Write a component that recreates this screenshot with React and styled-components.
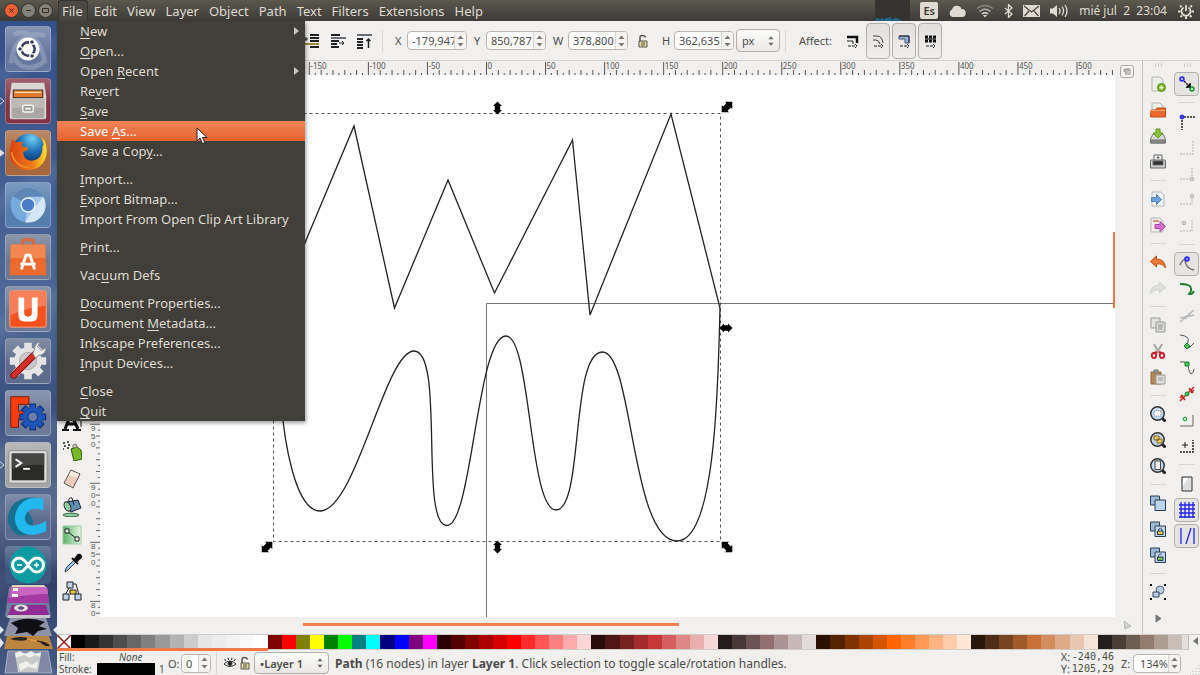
import React from "react";
import styled, { createGlobalStyle, css } from "styled-components";
import {
  FlipHorizontal,
  FlipVertical,
  RotateCcw,
  RotateCw,
  Layers,
  SquareDashed,
  SquareStack,
  ArrowDownToLine,
  ArrowUpToLine,
  MousePointer2,
  Spline,
  Waves,
  Search,
  Square,
  Box,
  Circle,
  Star,
  Tornado,
  Pencil,
  PenTool,
  Brush,
} from "lucide-react";

const GlobalStyle = createGlobalStyle`
  * {
    box-sizing: border-box;
  }
  body {
    margin: 0;
    font-family: "Noto Sans", "Open Sans", sans-serif;
    font-size: 12px;
    color: #4c4c4c;
    background: #f1f0ee;
  }
  button, input, select {
    font: inherit;
    color: inherit;
    margin: 0;
    padding: 0;
  }
  svg {
    display: block;
  }
`;

/* ---------- data ---------- */

const topMenus = ["Edit", "View", "Layer", "Object", "Path", "Text", "Filters", "Extensions", "Help"];

// the underscore marks the mnemonic letter
const fileMenu = [
  [{ label: "_New", sub: true }, { label: "_Open..." }, { label: "Open _Recent", sub: true }, { label: "Re_vert" }, { label: "_Save" }, { label: "Save _As...", active: true }, { label: "Save a Cop_y..." }],
  [{ label: "_Import..." }, { label: "_Export Bitmap..." }, { label: "Import From Open Clip Art Library" }],
  [{ label: "_Print..." }],
  [{ label: "Vac_uum Defs" }],
  [{ label: "_Document Properties..." }, { label: "Document _Metadata..." }, { label: "In_kscape Preferences..." }, { label: "_Input Devices..." }],
  [{ label: "_Close" }, { label: "_Quit" }],
];

const palette = [
  "#000000", "#1a1a1a", "#333333", "#4d4d4d", "#666666", "#808080", "#999999", "#b3b3b3", "#cccccc", "#e6e6e6", "#ececec", "#f2f2f2", "#f9f9f9", "#ffffff",
  "#800000", "#ff0000", "#808000", "#ffff00", "#008000", "#00ff00", "#008080", "#00ffff", "#000080", "#0000ff", "#800080", "#ff00ff",
  "#2b0000", "#550000", "#800000", "#aa0000", "#d40000", "#ff0000", "#ff2a2a", "#ff5555", "#ff8080", "#ffaaaa", "#ffd5d5",
  "#280b0b", "#501616", "#782121", "#a02c2c", "#c83737", "#d35f5f", "#de8787", "#e9afaf", "#f4d7d7",
  "#241c1c", "#483737", "#6c5353", "#916f6f", "#ac9393", "#c8b7b7", "#e3dbdb",
  "#2b1100", "#552200", "#803300", "#aa4400", "#d45500", "#ff6600", "#ff7f2a", "#ff9955", "#ffb380", "#ffccaa", "#ffe6d5",
  "#28170b", "#502d16", "#784421", "#a05a2c", "#c87137", "#d38d5f", "#deaa87", "#e9c6af", "#f4e3d7",
  "#241f1c", "#483e37", "#6c5d53", "#917c6f", "#ac9d93", "#c8beb7", "#e3dedb",
];

/* ---------- launcher icons ---------- */

const DashIcon = () => (
  <svg viewBox="0 0 46 46">
    <path d="M5 38C8 12 22 5 41 9M41 38C36 10 22 2 8 8M8 30c4 14 20 16 32 6" stroke="#b9c4da" strokeWidth="5" fill="none" opacity=".35" />
    <circle cx="23" cy="23" r="12" fill="#fff" />
    <circle cx="23" cy="23" r="7" fill="none" stroke="#343c5c" strokeWidth="2.6" />
    <g fill="#343c5c" stroke="#fff" strokeWidth="1.2">
      <circle cx="14.600" cy="23" r="2.500" />
      <circle cx="27.200" cy="15.700" r="2.500" />
      <circle cx="27.200" cy="30.300" r="2.500" />
    </g>
  </svg>
);

const FilesIcon = () => (
  <svg viewBox="0 0 46 46">
    <path d="M6 4h34l2 14v22q0 2-2 2H6q-2 0-2-2V18z" fill="#d9d7d4" />
    <path d="M7 11h32v9H7z" fill="#3a3029" />
    <path d="M8 12h30v7H8z" fill="#e2762c" />
    <path d="M9 14h28" stroke="#ffd9a0" strokeWidth="1.500" />
    <path d="M6 20h34v21H6z" fill="#a9a8a5" />
    <path d="M6 20h34v10H6z" fill="#bcbab7" />
    <rect x="17.500" y="27.500" width="11" height="7" rx="1.500" fill="#9b9a97" stroke="#f4f4f4" strokeWidth="1.500" />
    <path d="M20 31h6" stroke="#f4f4f4" strokeWidth="2" />
  </svg>
);

const FirefoxIcon = () => (
  <svg viewBox="0 0 46 46">
    <defs>
      <radialGradient id="ffGlobe" cx=".6" cy=".15" r=".8">
        <stop offset="0" stopColor="#6fd0ee" />
        <stop offset=".5" stopColor="#1c6fb5" />
        <stop offset="1" stopColor="#10275c" />
      </radialGradient>
      <linearGradient id="ffFox" x1="0" y1="0" x2="1" y2="0">
        <stop offset="0" stopColor="#d9400f" />
        <stop offset=".6" stopColor="#ee7a17" />
        <stop offset="1" stopColor="#fbe02c" />
      </linearGradient>
    </defs>
    <circle cx="24" cy="20" r="17" fill="url(#ffGlobe)" />
    <path d="M6 9c2 0 3 1 4 3 3-1 5-1 8 0l-2 3c1 2 4 2 7 2 1 3-3 4-5 5 0 5 3 9 9 9 7 0 12-6 11-15 3-1-1-8 0-9 5 5 5 13 4 19-2 9-9 15-18 15C12 41 4 33 4 24c0-5 1-8 2-15z" fill="url(#ffFox)" />
    <path d="M6 22c1 9 8 16 18 16" stroke="#f48a25" strokeWidth="2" fill="none" />
  </svg>
);

const ChromiumIcon = () => (
  <svg viewBox="0 0 46 46">
    <circle cx="23" cy="23" r="18" fill="#a4c7ea" />
    <path d="M23 23L7.500 14A18 18 0 0 1 39 14.500H23z" fill="#5c87b5" />
    <path d="M23 23L7.500 14A18 18 0 0 0 20 41z" fill="#76a9dd" />
    <path d="M39 14.500A18 18 0 0 1 20 41l9-14z" fill="#d5e6f6" />
    <circle cx="23" cy="23" r="8" fill="#e8f1fa" />
    <circle cx="23" cy="23" r="6.500" fill="#4a7fc8" />
  </svg>
);

const SoftwareIcon = () => (
  <svg viewBox="0 0 46 46">
    <path d="M17 13V8q0-3 3-3h6q3 0 3 3v5" stroke="#d8683e" strokeWidth="3" fill="none" />
    <path d="M5 10h36l1 31q0 1-1 1H5q-1 0-1-1z" fill="#ec6a2b" />
    <path d="M5 10h36l.4 14H4.600z" fill="#f1874e" />
    <path d="M16 36l5-15h4l5 15M15 30.500h16" stroke="#fff" strokeWidth="3" fill="none" />
  </svg>
);

const UbuntuOneIcon = () => (
  <svg viewBox="0 0 46 46">
    <rect x="4" y="4" width="38" height="38" rx="2" fill="#f5511d" stroke="#f7a88a" />
    <path d="M4.500 4.500h37v15q-20 2-37 10z" fill="#f98058" />
    <path d="M13 11h6v16q0 4 4 4t4-4V11h6v18q0 7-6 7h-8q-6 0-6-7z" fill="#fff" />
  </svg>
);

const SettingsIcon = () => (
  <svg viewBox="0 0 46 46">
    <g stroke="#e4e4e4" strokeWidth="8">
      <path d="M23 4v38M4 23h38M9.500 9.500l27 27M36.500 9.500l-27 27" />
    </g>
    <circle cx="23" cy="23" r="14.500" fill="#e4e4e4" />
    <circle cx="23" cy="23" r="9" fill="#c6c8cb" stroke="#aaa" />
    <path d="M8 38L30 16" stroke="#8d1210" strokeWidth="7" strokeLinecap="round" />
    <path d="M8 38L30 16" stroke="#d32f2a" strokeWidth="5" strokeLinecap="round" />
    <path d="M28 15l2-4q-1-6 6-8l-3 5 4 4 5-3q-1 8-8 8l-3 3z" fill="#eee" stroke="#888" />
  </svg>
);

const FreecadIcon = () => (
  <svg viewBox="0 0 46 46">
    <path d="M5 6h19v8H13v7h8v8h-8v9H5z" fill="#fc3d0b" stroke="#7a1a05" />
    <g stroke="#0b2c72" strokeWidth="7">
      <path d="M28 13v28M14 27h28M18 17l20 20M38 17L18 37" />
    </g>
    <g stroke="#1f55b8" strokeWidth="5">
      <path d="M28 14v26M15 27h26M19 18l18 18M37 18L19 36" />
    </g>
    <circle cx="28" cy="27" r="10" fill="#1f55b8" />
    <circle cx="28" cy="27" r="5" fill="#6d7fa8" stroke="#0b2c72" />
  </svg>
);

const TerminalIcon = () => (
  <svg viewBox="0 0 46 46">
    <rect x="3" y="8" width="40" height="34" rx="2" fill="#dcdcda" stroke="#8c8c8a" />
    <rect x="6" y="11" width="34" height="28" fill="#2a2a28" />
    <path d="M6 11h34v12Q20 22 6 28z" fill="#454543" />
    <path d="M10 17l6 4-6 4" stroke="#fff" strokeWidth="2" fill="none" />
    <path d="M18 27h7" stroke="#fff" strokeWidth="2" />
  </svg>
);

const CadIcon = () => (
  <svg viewBox="0 0 46 46">
    <path d="M37 4Q16-1 6 12-2 26 6 36q6 8 14 6l8-4V26L20 12z" fill="#17708f" />
    <path d="M39 4v12q-11-4-17 2-5 7 0 12 7 5 20-3v11q-18 8-29-2Q5 24 14 11 23 0 39 4z" fill="#22b8ee" />
  </svg>
);

const ArduinoIcon = () => (
  <svg viewBox="0 0 46 38">
    <circle cx="23" cy="19" r="18.500" fill="#0d9aa0" />
    <path d="M23 19c-4-6-6-7-8.500-7a7 7 0 0 0 0 14c2.500 0 4.500-1 8.500-7s6-7 8.500-7a7 7 0 0 1 0 14c-2.500 0-4.500-1-8.500-7z" fill="none" stroke="#fff" strokeWidth="3" />
    <path d="M12 19h5M29 19h5M31.500 16.500v5" stroke="#fff" strokeWidth="1.600" />
  </svg>
);

const FoldedStack = () => (
  <svg viewBox="0 0 57 91" width="57" height="91">
    <path d="M9 3h38l4 30H5z" fill="#8d95b0" opacity=".7" />
    <path d="M12 1h32l3 3H11z" fill="#d9d3c4" />
    <path d="M11 3h36l2 16H7z" fill="#a53ba2" />
    <path d="M11 3h36l1 7q-20 0-39 4z" fill="#c765c0" />
    <path d="M13 4h5v3h-5zM12 10h6v3h-6z" fill="#fff" />
    <path d="M12 21h34l3 10H8z" fill="#8f2b92" />
    <ellipse cx="21" cy="24" rx="7" ry="3.500" fill="#ddd" />
    <ellipse cx="21" cy="24" rx="3" ry="1.800" fill="#6a4a80" />
    <path d="M8 31h42v3H7z" fill="#c5c6c8" />
    <path d="M10 34h36l6 18H4z" fill="#8e93a6" />
    <path d="M11 39q16-8 34-1l-6 4 8 3-9 2-5 5-6-4-12 2 3-6z" fill="#101014" />
    <path d="M0 42l4 4-4 4zM57 42l-4 4 4 4z" fill="#e3e6ee" />
    <path d="M0 54l4 5-4 5z" fill="#e3e6ee" />
    <path d="M7 52h42l4 13H4z" fill="#bb8640" />
    <path d="M10 55q10-4 22 0l8 2q8 1 10 5-6 1-10-4l-13-2q-8 2-17-1z" fill="#2b2320" />
    <path d="M27 55l10 2" stroke="#e79a3f" strokeWidth="2" />
    <path d="M8 67h40l4 22H5z" fill="#8089a3" stroke="#a7aec2" />
    <path d="M15 69h26l-3 19H18z" fill="#c9cbc9" />
    <path d="M15 69l5-2 5 3 6-3 5 3 5-2-1 5-5-2-5 3-6-3-8 3zM19 80l7-3 6 4 6-4-1 8-9-2-8 4z" fill="#eff0ec" />
  </svg>
);

const launcherItems = [
  { name: "Dash", icon: <DashIcon />, tint: "#64789f" },
  { name: "Files", icon: <FilesIcon />, tint: "#833343", mark: "hollow" },
  { name: "Firefox", icon: <FirefoxIcon />, tint: "#a8683f", mark: "solid" },
  { name: "Chromium", icon: <ChromiumIcon />, tint: "#577fae" },
  { name: "Software", icon: <SoftwareIcon />, tint: "#6d7893" },
  { name: "Ubuntu One", icon: <UbuntuOneIcon />, tint: "#6d7893" },
  { name: "Settings", icon: <SettingsIcon />, tint: "#5d6c8c" },
  { name: "FreeCAD", icon: <FreecadIcon />, tint: "#6b7a98" },
  { name: "Terminal", icon: <TerminalIcon />, tint: "#a5a5a5", mark: "hollow" },
  { name: "CAD", icon: <CadIcon />, tint: "#5a6c90" },
];

/* ---------- small icons ---------- */

const Icon = styled.svg.attrs((p) => ({
  viewBox: "0 0 16 16",
  fill: "none",
  stroke: p.stroke || "#222",
}))`
  width: 16px;
  height: 16px;
  flex: none;
`;

const LowerBottomIcon = () => (
  <Icon strokeWidth="2">
    <path d="M6 2h9M6 5h9M6 8h9M6 14h9" />
    <path d="M0 11h15" stroke="#a08a3a" />
    <path d="M0 6h4M2 4v4" strokeWidth="1" />
  </Icon>
);
const LowerIcon = () => (
  <Icon strokeWidth="2">
    <path d="M1 2h9M1 8h8M1 11h6M1 14h8" />
    <path d="M1 5h15" stroke="#666e78" />
    <path d="M9 10h5m-2-2l2 2-2 2" strokeWidth="1" />
  </Icon>
);
const RaiseTopIcon = () => (
  <Icon strokeWidth="2">
    <path d="M1 6h6M1 9h6M1 12h6M1 15h6" />
    <path d="M1 2h15" stroke="#666e78" />
    <path d="M12.500 15V6m-2 2l2-2 2 2" strokeWidth="1.500" />
  </Icon>
);
const LockIcon = () => (
  <Icon stroke="#555">
    <path d="M5 8V4.500q0-2 2.500-2t3 2" strokeWidth="1.500" />
    <path d="M4 8h8v6H4z" fill="#e9dc9a" />
    <path d="M6 10h4M6 12h4" />
  </Icon>
);
const ScaleStrokeIcon = () => (
  <Icon>
    <path d="M3 4h10v6" strokeWidth="2.500" stroke="#111" />
    <path d="M3 8h6v3" />
    <path d="M4 13h9m-2-2l2 2-2 2" strokeDasharray="3 1" />
  </Icon>
);
const ScaleRadiusIcon = () => (
  <Icon>
    <path d="M3 3h4q5 0 6 7M3 7h3q3 0 4 4" stroke="#444" />
    <path d="M4 13h9m-2-2l2 2-2 2" strokeDasharray="3 1" />
  </Icon>
);
const GradientMoveIcon = () => (
  <Icon>
    <path d="M3 3h10v7H9V6H3z" fill="#8fb3da" stroke="#557" />
    <path d="M3 3h10v7" />
    <path d="M4 13h9m-2-2l2 2-2 2" strokeDasharray="3 1" />
  </Icon>
);
const PatternMoveIcon = () => (
  <Icon>
    <path d="M3 4h11M3 8h11" strokeWidth="3" stroke="#111" strokeDasharray="3 1" />
    <path d="M3 6h11" stroke="#111" />
    <path d="M4 13h9m-2-2l2 2-2 2" strokeDasharray="3 1" />
  </Icon>
);
const EyeIcon = () => (
  <Icon stroke="#333">
    <path d="M2 9q6-6 12 0-6 5-12 0zM4 6L2.500 4M6.500 5L6 2.500M9.500 5l.5-2.500M12 6l1.500-2" />
    <circle cx="8" cy="8.500" r="2" fill="#222" />
  </Icon>
);

const NewDoc = () => (
  <Icon stroke="#b5b5b2">
    <path d="M2 1h8l3 3v11H2z" fill="#eceeea" />
    <circle cx="11.500" cy="11.500" r="4" fill="#80b629" stroke="#5d8a1a" />
    <path d="M11.500 9.500v4M9.500 11.500h4" stroke="#e6f5c8" strokeWidth="1.500" />
  </Icon>
);
const OpenDoc = () => (
  <Icon stroke="#b5b5b2">
    <path d="M2 9V1h8l3 3v5" fill="#eceeea" />
    <path d="M.5 15L1 8h4l2-2h8.500v9z" fill="#ee682b" stroke="#c44d18" />
    <path d="M1 8.500h14" stroke="#f9ab7e" />
  </Icon>
);
const SaveDoc = () => (
  <Icon stroke="#777">
    <path d="M3 6h10l2.500 5v4H.5v-4z" fill="#d6d7d5" />
    <path d="M1 12h14v3H1z" fill="#888a86" />
    <path d="M6 1h4v4h3l-5 5-5-5h3z" fill="#8bc53c" stroke="#63951e" />
  </Icon>
);
const PrintDoc = () => (
  <Icon stroke="#666">
    <path d="M4 6V1h8v5" fill="#f4f4f4" />
    <path d="M.5 7q0-1 1-1h13q1 0 1 1v7H.5z" fill="#cfd0ce" />
    <path d="M3 7h10v4H3z" fill="#333" />
    <path d="M8 2v3M6.500 3.500h3" />
  </Icon>
);
const ImportDoc = () => (
  <Icon stroke="#b5b5b2">
    <path d="M2 1h9l3 3v11H2z" fill="#f5f6f8" />
    <path d="M1.500 6.500h5v-3l5 5-5 5v-3h-5z" fill="#6fa4d8" stroke="#4a83bd" />
  </Icon>
);
const ExportDoc = () => (
  <Icon stroke="#b5b5b2">
    <path d="M1 1h9l3 3v11H1z" fill="#f6ecec" />
    <path d="M3 4h6" stroke="#c98" strokeWidth="2" />
    <path d="M5 7.500h5v-3l5.500 5-5.500 5v-3H5z" fill="#d56fd0" stroke="#a94aa5" />
  </Icon>
);
const UndoIcon = () => (
  <Icon stroke="#bd5218">
    <path d="M6.500 2v3Q15 5 15.500 14q-3-5-9-4v3l-6-5.500z" fill="#ec7a35" />
  </Icon>
);
const RedoIcon = () => (
  <Icon stroke="#cfd2cc">
    <path d="M9.500 2v3Q1 5 .5 14q3-5 9-4v3l6-5.500z" fill="#dde0da" />
  </Icon>
);
const CopyDoc = () => (
  <Icon stroke="#9a9a97">
    <path d="M1 1h9v10H1z" fill="#e2e3e0" />
    <path d="M6 5h9v10H6z" fill="#d9dad7" />
    <path d="M8 8h5M8 10h5M8 12h4" />
  </Icon>
);
const CutIcon = () => (
  <Icon>
    <path d="M4 1l5 9M12 1l-5 9" stroke="#a5a5a5" strokeWidth="2" />
    <path d="M7 9l-3 1M9 9l3 1" stroke="#c8202a" strokeWidth="2" />
    <ellipse cx="4" cy="12.500" rx="2.200" ry="2.500" stroke="#c8202a" strokeWidth="1.800" />
    <ellipse cx="12" cy="12.500" rx="2.200" ry="2.500" stroke="#c8202a" strokeWidth="1.800" />
  </Icon>
);
const PasteIcon = () => (
  <Icon stroke="#8a6a40">
    <path d="M1 3h10v12H1z" fill="#b38a55" />
    <path d="M4 1h4v3H4z" fill="#999" stroke="#777" />
    <path d="M6 6h9v9H6z" fill="#dfe0dd" stroke="#9a9a97" />
    <path d="M8 9h5M8 11h5" stroke="#9a9a97" />
  </Icon>
);
const Zoom = ({ children }) => (
  <Icon>
    <path d="M12 12l3.500 3.500" stroke="#222" strokeWidth="3" />
    <circle cx="7.500" cy="7.500" r="6.700" fill="#c4d9ee" stroke="#333" strokeWidth="1.500" />
    {children}
  </Icon>
);
const Windows = ({ children }) => (
  <Icon stroke="#2c3e52">
    <path d="M.5 1h9v9h-9z" fill="#9dbad6" />
    <path d="M5 5h10.500v10.500H5z" fill="#bcd5ec" />
    {children}
  </Icon>
);
const CloneIcon = () => (
  <Icon>
    <circle cx="10" cy="6" r="4" fill="#b8cde2" stroke="#567" />
    <path d="M3 8h6v5H3z" fill="#b8cde2" stroke="#345" />
    <path d="M0 1h2M14 1h2M0 15h2M14 15h2" strokeWidth="2" stroke="#111" />
  </Icon>
);
const ExpandIcon = () => (
  <Icon>
    <path d="M6 5l5 3.500L6 12z" fill="#777" stroke="#777" />
  </Icon>
);

const commands = [
  [["New document", <NewDoc />], ["Open document", <OpenDoc />], ["Save document", <SaveDoc />], ["Print", <PrintDoc />]],
  [["Import", <ImportDoc />], ["Export", <ExportDoc />]],
  [["Undo", <UndoIcon />], ["Redo", <RedoIcon />]],
  [["Copy", <CopyDoc />], ["Cut", <CutIcon />], ["Paste", <PasteIcon />]],
  [
    ["Zoom selection", <Zoom><path d="M4 5h7v5H4z" fill="#fff" strokeDasharray="1 1" stroke="#888" /></Zoom>],
    ["Zoom drawing", <Zoom><path d="M4 4h5v4H4zM7 7h5v4H7z" fill="#f4cf62" stroke="#7a6220" /></Zoom>],
    ["Zoom page", <Zoom><path d="M5 3h5.500v8.500H5z" fill="#eee" stroke="#444" /></Zoom>],
  ],
  [
    ["Duplicate", <Windows />],
    ["Clone", <Windows><path d="M8.500 10V8.500q2-2.500 3.500 0V10" /><path d="M7.500 10h5.500v3.500H7.500z" fill="#f2c63c" /></Windows>],
    ["Unlink clone", <Windows><path d="M8.500 10V8.500q1-2 3-1.500" /><path d="M7.500 10h5.500v3.500H7.500z" fill="#7fc04a" /></Windows>],
  ],
  [["Group", <CloneIcon />], ["More commands", <ExpandIcon />]],
];

const Faint = ({ d, dot }) => (
  <Icon stroke="#b3b3b3">
    <path d={d} strokeDasharray="2 1" />
    {dot && <circle cx={dot[0]} cy={dot[1]} r="1.800" fill="#d5d5d5" />}
  </Icon>
);

const snaps = [
  [
    ["Enable snapping", <Icon><path d="M3 3l9 9" stroke="#111" strokeWidth="1.500" strokeDasharray="2 1" /><path d="M11.500 7v4.500H7z" fill="#111" /><circle cx="3" cy="3" r="2" stroke="#2020ee" strokeWidth="1.500" fill="#bbf" /><circle cx="13" cy="13" r="2" stroke="#1c8a3a" strokeWidth="1.500" fill="#bfb" /></Icon>, true],
  ],
  [
    ["Snap bounding box", <Icon><path d="M2 3h14M3 3v13" strokeDasharray="2 1" strokeWidth="1.500" /><circle cx="3" cy="3" r="2" fill="#44f" stroke="#22e" /></Icon>],
    ["Snap edges", <Faint d="M1 14h13V0" />],
    ["Snap corners", <Faint d="M1 13h12V1" dot={[13, 13]} />],
    ["Snap edge midpoints", <Faint d="M1 12h12V2" dot={[13, 4]} />],
    ["Snap centers", <Faint d="M1 13h12V1" dot={[5, 5]} />],
  ],
  [
    ["Snap nodes", <Icon stroke="#666"><path d="M1 9q3-7 7-6-3 1-1 5 2 5 8 6" strokeWidth="1.300" /><circle cx="8" cy="3" r="2" stroke="#2020ee" strokeWidth="1.500" fill="#88f" /></Icon>, true],
    ["Snap paths", <Icon stroke="#1c7a2a" strokeWidth="1.800"><path d="M1 2q10 0 11 4 1 3-2 6 3 1 5-3" /></Icon>],
    ["Snap intersections", <Icon stroke="#b8b8b8" strokeWidth="1.500"><path d="M1 14L15 2M1 10l14-3M6 11l5-6" /></Icon>],
    ["Snap cusp nodes", <Icon stroke="#555"><path d="M1 1q10 1 8 7-1 5-2 4l3 2 5-5" /><path d="M8 9l3 3-3 3-3-3z" fill="#5b5" stroke="#183" /></Icon>],
    ["Snap smooth nodes", <Icon stroke="#555"><path d="M1 2q6-1 8 3 1 8 3 9 3-1 3-5" /><path d="M6 2h4v4H6z" fill="#5b5" stroke="#183" /></Icon>],
    ["Snap line midpoints", <Icon stroke="#c22"><path d="M1 15L15 1M2 9l4 5M10 2l4 5M1 12l3-3M12 7l3-3" strokeWidth="1.500" /><circle cx="8" cy="8" r="2" fill="#5b5" stroke="#183" /></Icon>],
    ["Snap object centers", <Icon stroke="#666"><path d="M1 14h13V3" /><circle cx="6" cy="7" r="1.800" fill="#bfb" stroke="#1c8a3a" /></Icon>],
    ["Snap rotation centers", <Icon><path d="M1 14h13V2" strokeDasharray="2 1" strokeWidth="1.500" /><path d="M3 7h6M6 4v6" /></Icon>],
  ],
  [
    ["Snap page border", <Icon stroke="#333"><path d="M3 1h10v14H3z" fill="#ddd" /><path d="M4 2h5l-5 8z" fill="#fff" stroke="none" /></Icon>],
    ["Snap to grids", <Icon stroke="#2222ee" strokeWidth="1.300"><path d="M0 3h16M0 7h16M0 11h16M0 15h16M2 0v16M6 0v16M10 0v16M14 0v16" /></Icon>, true],
    ["Snap to guides", <Icon stroke="#2222ee" strokeWidth="1.300"><path d="M2 0v16M7 16l5-16M15 0v16" /></Icon>, true],
  ],
];

const tools = [
  ["Text", <svg viewBox="0 0 20 20"><path d="M3 16L9 1l7 15M5 11h9" stroke="#111" strokeWidth="3" fill="none" /><path d="M0 17h7M11 17h8" stroke="#111" strokeWidth="2" /><path d="M19 3v11" stroke="#111" /></svg>],
  ["Spray", <svg viewBox="0 0 20 20"><path d="M9 8l6-2 4 3 1 9-8 2z" fill="#77b82c" stroke="#335a10" /><path d="M11 7V4l3-1 1 3z" fill="#ddd0a0" stroke="#777" /><path d="M1 2h2M5 1h2M2 5h2M6 4h2M1 8h1M5 7h2" stroke="#222" strokeWidth="1.500" /></svg>],
  ["Eraser", <svg viewBox="0 0 20 20"><path d="M9 1l9 4-7 14-9-5z" fill="#f3cbbb" stroke="#555" /><path d="M9 2l8 3-2 4-8-3z" fill="#fbeae3" /></svg>],
  ["Bucket fill", <svg viewBox="0 0 20 20"><ellipse cx="9" cy="18" rx="8" ry="1.800" fill="#8fc7a0" stroke="#2d6a45" /><path d="M5 5l11-2 3 8-10 4z" fill="#5f8fb4" stroke="#223" /><ellipse cx="5.500" cy="9.500" rx="3" ry="5" transform="rotate(-25 5.500 9.500)" fill="#8ccf9c" stroke="#223" /><path d="M7 5q-1-5 3-4l2 7" fill="none" stroke="#222" /></svg>],
  ["Gradient", <svg viewBox="0 0 20 20"><defs><linearGradient id="toolGradient"><stop offset="0" stopColor="#58b368" /><stop offset="1" stopColor="#e6f5e6" /></linearGradient></defs><path d="M1 1h18v18H1z" fill="url(#toolGradient)" stroke="#9cc8a0" /><path d="M5 6l11 9" stroke="#222" /><path d="M3 4h4v4H3zM13 12h4v4h-4z" fill="#e8f2e8" stroke="#222" /></svg>],
  ["Dropper", <svg viewBox="0 0 20 20"><path d="M12 7l2 2-8 8-3 2 1-4z" fill="#9cc0de" stroke="#345" /><path d="M10 5l6 6M13 6l3-4q3-1 3 2l-4 4z" fill="#111" stroke="#111" strokeWidth="2" /></svg>],
  ["Connector", <svg viewBox="0 0 20 20"><path d="M7 7L3 14M11 3h3l3 11" stroke="#222" fill="none" /><path d="M5 1h6v6H5zM1 13h6v6H1zM13 13h6v6h-6z" fill="#bcd3ec" stroke="#222" /><path d="M8 9h6v4H8z" fill="#f4c542" stroke="#222" /></svg>],
];

const shapeTools = [MousePointer2, Spline, Waves, Search, Square, Box, Circle, Star, Tornado, Pencil, PenTool, Brush];
const selectTools = [SquareStack, Layers, SquareDashed, RotateCcw, RotateCw, FlipHorizontal, FlipVertical, ArrowDownToLine, ArrowUpToLine];

/* ---------- rulers and canvas ---------- */

const UNIT = 1.181;

function TopRuler() {
  const marks = [];
  for (let v = -325; v <= 535; v += 5) {
    const x = 386.5 + v * UNIT;
    if (v % 50 === 0) {
      marks.push(<path key={v} d={`M${x} 1v13`} />);
      marks.push(<text key={`t${v}`} x={x + 1} y="8">{v}</text>);
    } else {
      marks.push(<path key={v} d={`M${x} 14v${v % 10 === 0 ? -5 : -2}`} />);
    }
  }
  return <TopRulerSvg aria-hidden="true">{marks}</TopRulerSvg>;
}

function SideRuler() {
  const marks = [];
  for (let v = 1150; v >= 790; v -= 5) {
    const y = 422.3 + (900 - v) * UNIT;
    if (v % 50 === 0) {
      // digits stack downwards, the last one may fall off the ruler
      const digits = String(v).split("").filter((_, i) => y + i * 8 < 550);
      marks.push(<path key={v} d={`M0 ${y}h10`} />);
      marks.push(
        <text key={`t${v}`}>
          {digits.map((digit, i) => (
            <tspan key={i} x="1" y={y + 7 + i * 8}>{digit}</tspan>
          ))}
        </text>
      );
    } else {
      marks.push(<path key={v} d={`M10 ${y}h${v % 10 === 0 ? -4 : -2}`} />);
    }
  }
  return <SideRulerSvg aria-hidden="true">{marks}</SideRulerSvg>;
}

const ARROW = "M0-6.500L4.500-2H2.700V2H4.500L0 6.500-4.500 2h1.800V-2h-1.800z";
const handles = [
  [497.5, 108, "rotate(0)"],
  [727, 107, "rotate(45) scale(1.15)"],
  [726, 328, "rotate(90)"],
  [727, 547, "rotate(-45) scale(1.15)"],
  [497.5, 547, "rotate(0)"],
  [267, 547, "rotate(45) scale(1.15)"],
];

function Drawing() {
  return (
    <CanvasSvg role="img" aria-label="Path">
      <g transform="translate(-100 -75)" fill="none">
        <path d="M2000 303.500H486.500V2000" stroke="#777" />
        <path d="M273.500 113.500h447v428h-447z" stroke="#555" strokeDasharray="3 3" />
        <path
          stroke="#222"
          strokeWidth="1.300"
          d="M281 300L354 126 394.500 308 448 180 494.500 293 572.500 140 590 315 671 114 720 308
             C718 400 714 541 677 541 C631 541 633 352 602.500 352 C570 352 584 510 556 510
             C529 510 531 336 506 336 C477 336 472 525.500 447 525.500 C419 525.500 445 351 414 351
             C385 351 356 511 320 511 C295 511 284 440 281 400z"
        />
        {handles.map(([x, y, turn]) => (
          <path key={`${x}-${y}`} d={ARROW} fill="#000" transform={`translate(${x} ${y}) ${turn}`} />
        ))}
      </g>
    </CanvasSvg>
  );
}

/* ---------- small parts ---------- */

function Mnemonic({ text }) {
  const at = text.indexOf("_");
  if (at < 0) return text;
  return (
    <>
      {text.slice(0, at)}
      <u>{text[at + 1]}</u>
      {text.slice(at + 2)}
    </>
  );
}

function Spin({ label, value, width, labelWidth, align }) {
  return (
    <SpinLabel>
      <SpinName $width={labelWidth}>{label}</SpinName>
      <SpinBox $width={width}>
        <SpinInput type="text" defaultValue={value} $align={align} />
        <SpinArrows>
          <svg viewBox="0 0 7 12" width="7" height="12" fill="#777">
            <path d="M.5 4l3-3.500 3 3.500zM.5 8l3 3.500 3-3.500z" />
          </svg>
        </SpinArrows>
      </SpinBox>
    </SpinLabel>
  );
}

const SelectArrows = () => (
  <ArrowsOverlay viewBox="0 0 7 12" fill="#666">
    <path d="M.5 4l3-3.500 3 3.500zM.5 8l3 3.500 3-3.500z" />
  </ArrowsOverlay>
);

export default function App() {
  return (
    <Desktop>
      <GlobalStyle />
      <TopBar>
        <WindowButtons>
          <WindowButton $close aria-label="Close"><svg viewBox="0 0 13 13"><path d="M4.500 4.500l4 4M8.500 4.500l-4 4" /></svg></WindowButton>
          <WindowButton aria-label="Minimize"><svg viewBox="0 0 13 13"><path d="M4 6.500h5" /></svg></WindowButton>
          <WindowButton aria-label="Restore"><svg viewBox="0 0 13 13"><path d="M3.500 4.500h6v4h-6z" /></svg></WindowButton>
        </WindowButtons>
        <MenuBar>
          <FileHolder>
            <MenuTitle $open>File</MenuTitle>
            <FileMenu>
              {fileMenu.map((group, i) => (
                <MenuGroup key={i}>
                  {group.map((item) => (
                    <MenuItem key={item.label} $active={item.active}>
                      <span><Mnemonic text={item.label} /></span>
                      {item.sub && <svg viewBox="0 0 5 8" width="5" height="8"><path d="M0 0l5 4-5 4z" fill="#c9c5bb" /></svg>}
                      {item.active && (
                        <Pointer viewBox="0 0 12 18">
                          <path d="M1 1v13l3-3 2.500 5.500 2.500-1L6.500 10.500H11z" fill="#fff" stroke="#222" />
                        </Pointer>
                      )}
                    </MenuItem>
                  ))}
                </MenuGroup>
              ))}
            </FileMenu>
          </FileHolder>
          {topMenus.map((name) => (
            <MenuTitle key={name}>{name}</MenuTitle>
          ))}
        </MenuBar>
        <Indicators>
          <LoadGraph viewBox="0 0 35 21"><path d="M0 20h26M1 19h3M6 19h2M10 19h5M14 18h2M19 19h4" stroke="#1583bd" /></LoadGraph>
          <Keyboard>Es</Keyboard>
          <svg width="18" height="14" viewBox="0 0 18 14"><path d="M4.500 13a4 4 0 0 1-.5-7.500A5 5 0 0 1 13.500 5 4 4 0 0 1 14 13z" fill="#dfdbd2" /></svg>
          <svg width="18" height="14" viewBox="0 0 18 14" fill="none" strokeWidth="1.500"><path d="M1 4.500q8-6 16 0" stroke="#8b887f" /><path d="M3.500 7.500q5.500-4.500 11 0" stroke="#b3afa6" /><path d="M6 10q3-2.500 6 0" stroke="#dfdbd2" /><path d="M7 11l2 2.500 2-2.500z" fill="#dfdbd2" /></svg>
          <svg width="9" height="14" viewBox="0 0 9 14"><path d="M1 4l7 6-3.500 3.500v-13L8 4l-7 6" fill="none" stroke="#dfdbd2" strokeWidth="1.300" /></svg>
          <svg width="17" height="12" viewBox="0 0 17 12"><path d="M0 0h17v12H0z" fill="#dfdbd2" /><path d="M1 1l7.500 6L16 1M1.500 11L6 6M15.500 11L11 6" fill="none" stroke="#47453f" strokeWidth="1.200" /></svg>
          <svg width="18" height="14" viewBox="0 0 18 14"><path d="M0 4.500h3l4-3.500v12L3 9.500H0z" fill="#dfdbd2" /><path d="M9 4q2 3 0 6M12 2.500q3 4.500 0 9M15 1q4 6 0 12" fill="none" stroke="#dfdbd2" strokeWidth="1.300" /></svg>
          <Clock>mié jul &nbsp;2 &nbsp;23:04</Clock>
          <svg width="16" height="16" viewBox="0 0 16 16" fill="none" stroke="#dfdbd2"><path d="M5.500 4.500a4.500 4.500 0 1 0 5 0M8 2v6" strokeWidth="1.800" /><path d="M3.500 4L2 2.500M12.500 4L14 2.500M2.500 8.500H0M13.500 8.500H16M4 12.500L2.500 14M12 12.500l1.500 1.500M8 13.500V16" strokeWidth="2" /></svg>
        </Indicators>
      </TopBar>

      <Body>
        <Launcher aria-label="Launcher">
          {launcherItems.map((item) => (
            <Tile key={item.name} $tint={item.tint} aria-label={item.name}>
              {item.mark && (
                <RunMark viewBox="0 0 5 8">
                  <path d="M-1 0L4 4l-5 4" fill={item.mark === "solid" ? "#dfe3ec" : "none"} stroke="#cfd5e2" />
                </RunMark>
              )}
              {item.icon}
            </Tile>
          ))}
          <ShortTile $tint="#40577f" aria-label="Arduino"><ArduinoIcon /></ShortTile>
          <FoldedStack />
        </Launcher>

        <Editor>
          <Toolbar>
            <SelectTools>
              {selectTools.map((Shape, i) => (
                <ToolButton key={i} tabIndex={-1}><Shape size={16} /></ToolButton>
              ))}
              <ToolButton aria-label="Lower to bottom"><LowerBottomIcon /></ToolButton>
              <ToolButton aria-label="Lower"><LowerIcon /></ToolButton>
              <ToolButton aria-label="Raise to top"><RaiseTopIcon /></ToolButton>
            </SelectTools>
            <Divider />
            <Fields>
              <Spin label="X" value="-179,947" width={60} labelWidth={12} />
              <Spin label="Y" value="850,787" width={60} labelWidth={12} />
              <Spin label="W" value="378,800" width={60} labelWidth={15} />
              <LockButton aria-label="Lock ratio"><LockIcon /></LockButton>
              <Spin label="H" value="362,635" width={60} labelWidth={12} />
            </Fields>
            <UnitBox>
              <UnitSelect aria-label="Unit" defaultValue="px"><option>px</option></UnitSelect>
              <SelectArrows />
            </UnitBox>
            <Divider />
            <AffectText>Affect:</AffectText>
            <AffectButton aria-label="Scale stroke width"><ScaleStrokeIcon /></AffectButton>
            <AffectButton $on aria-label="Scale rounded corners"><ScaleRadiusIcon /></AffectButton>
            <AffectButton $on aria-label="Move gradients"><GradientMoveIcon /></AffectButton>
            <AffectButton $on aria-label="Move patterns"><PatternMoveIcon /></AffectButton>
          </Toolbar>

          <Workspace>
            <Toolbox>
              {shapeTools.map((Shape, i) => (
                <ToolboxButton key={i} tabIndex={-1}><Shape size={18} /></ToolboxButton>
              ))}
              {tools.map(([name, icon]) => (
                <ToolboxButton key={name} aria-label={name}>{icon}</ToolboxButton>
              ))}
            </Toolbox>
            <SideRuler />
            <Center>
              <TopRuler />
              <CanvasArea>
                <Drawing />
                <VerticalThumb />
              </CanvasArea>
              <ScrollRow><HorizontalThumb /></ScrollRow>
            </Center>
            <Gutter>
              <CornerButton aria-label="Display mode"><svg viewBox="0 0 8 8" fill="none" stroke="#888"><path d="M3 7V1h4v6M5 1v6M3 1Q0 1 1 3t2 1" /></svg></CornerButton>
              <svg width="10" height="10" viewBox="0 0 10 10"><path d="M2 1l7 5-6 3z" fill="#cfd3cc" stroke="#b5b8b2" /></svg>
            </Gutter>
            <Dock $border $gap={11}>
              <Grip />
              {commands.map((group, i) => (
                <DockGroup key={i}>
                  {group.map(([name, icon]) => (
                    <DockButton key={name} aria-label={name}>{icon}</DockButton>
                  ))}
                </DockGroup>
              ))}
            </Dock>
            <Dock $gap={12}>
              <Grip />
              {snaps.map((group, i) => (
                <DockGroup key={i}>
                  {group.map(([name, icon, on]) => (
                    <DockButton key={name} aria-label={name} $on={on}>{icon}</DockButton>
                  ))}
                </DockGroup>
              ))}
            </Dock>
          </Workspace>

          <PaletteRow>
            <Palette>
              <NoColor aria-label="None"><svg viewBox="0 0 14 14" preserveAspectRatio="none"><path d="M0 0l14 14M14 0L0 14" stroke="#8b1a1a" strokeWidth="1.500" /></svg></NoColor>
              {palette.map((color, i) => (
                <Swatch key={i} $color={color} aria-label={color} />
              ))}
            </Palette>
            <PaletteThumb />
            <PaletteArrow viewBox="0 0 5 8"><path d="M5 0L0 4l5 4z" fill="#777" /></PaletteArrow>
          </PaletteRow>

          <StatusBar>
            <StyleBox>
              <span>Fill:</span>
              <NoneText>None</NoneText>
              <span>Stroke:</span>
              <StrokeSwatch aria-label="Stroke colour" />
              <StrokeWidth>1</StrokeWidth>
            </StyleBox>
            <Spin label="O:" value="0" width={30} labelWidth={13} />
            <Divider />
            <StatusButton aria-label="Layer visibility"><EyeIcon /></StatusButton>
            <StatusButton aria-label="Layer lock"><LockIcon /></StatusButton>
            <LayerBox>
              <LayerSelect aria-label="Layer" defaultValue="•Layer 1"><option>•Layer 1</option></LayerSelect>
              <SelectArrows />
            </LayerBox>
            <Message>
              <b>Path</b> (16 nodes) in layer <b>Layer 1</b>. Click selection to toggle scale/rotation handles.
            </Message>
            <Coords>
              <span>X:</span><span>-240,46</span>
              <span>Y:</span><span>1205,29</span>
            </Coords>
            <Spin label="Z:" value="134%" width={48} labelWidth={12} align="right" />
            <ResizeGrip viewBox="0 0 10 10"><path d="M9 0v10M6 3v7M3 6v4M0 9v1" stroke="#bbb" strokeDasharray="1 2" /></ResizeGrip>
          </StatusBar>
        </Editor>
      </Body>
    </Desktop>
  );
}

/* ---------- styles ---------- */

const Desktop = styled.div`
  min-height: 100vh;
  display: flex;
  flex-direction: column;
`;

const TopBar = styled.header`
  height: 21px;
  display: flex;
  align-items: center;
  background: linear-gradient(#5b584e, #3c3b37);
  color: #dfdbd2;
  font-size: 13px;
`;

const WindowButtons = styled.div`
  display: flex;
  gap: 4px;
  width: 58px;
  padding-left: 5px;
`;

const WindowButton = styled.button`
  width: 13px;
  height: 13px;
  border: 0;
  border-radius: 50%;
  background: ${(p) => (p.$close ? "#ee6036" : "#85827a")};
  box-shadow: 0 0 0 1px #3a3934;
  svg {
    fill: none;
    stroke: #3a2f28;
  }
`;

const MenuBar = styled.nav`
  display: flex;
  align-items: stretch;
  height: 21px;
`;

const FileHolder = styled.div`
  position: relative;
  display: flex;
`;

const MenuTitle = styled.button`
  border: 0;
  background: none;
  padding: 0 5px;
  line-height: 20px;
  ${(p) =>
    p.$open &&
    css`
      background: #4a4842;
      padding: 0 4px 0 3px;
      border: 1px solid #35332f;
      border-bottom: 0;
      border-radius: 3px 3px 0 0;
      line-height: 18px;
      margin-right: 1px;
    `}
`;

const FileMenu = styled.div`
  position: absolute;
  z-index: 5;
  top: 100%;
  left: -1px;
  width: 248px;
  background: #413f3a;
  box-shadow: 1px 2px 4px rgba(0, 0, 0, 0.4);
`;

const MenuGroup = styled.div`
  & + & {
    padding-top: 8px;
  }
`;

const MenuItem = styled.button`
  position: relative;
  display: flex;
  align-items: center;
  justify-content: space-between;
  width: 100%;
  height: 20px;
  border: 0;
  padding: 0 6px 0 23px;
  text-align: left;
  color: ${(p) => (p.$active ? "#fff" : "#dfdbd2")};
  background: ${(p) => (p.$active ? "linear-gradient(#f68456, #e2622f)" : "none")};
  u {
    text-underline-offset: 2px;
  }
`;

const Pointer = styled.svg`
  position: absolute;
  left: 139px;
  top: 6px;
  width: 12px;
  height: 18px;
  z-index: 1;
`;

const Indicators = styled.div`
  display: flex;
  align-items: center;
  gap: 10px;
  margin-left: auto;
  padding-right: 6px;
`;

const LoadGraph = styled.svg`
  width: 35px;
  height: 21px;
  background: #34332f;
`;

const Keyboard = styled.span`
  width: 18px;
  line-height: 17px;
  border-radius: 2px;
  background: #dfdbd2;
  color: #3c3b37;
  font-size: 11px;
  font-weight: 600;
  text-align: center;
`;

const Clock = styled.span`
  padding: 0 1px;
  font-size: 12px;
  white-space: nowrap;
`;

const Body = styled.div`
  flex: 1;
  display: flex;
`;

const Launcher = styled.aside`
  width: 57px;
  flex: none;
  display: flex;
  flex-direction: column;
  padding-top: 5px;
  background:
    repeating-linear-gradient(150deg, transparent 0 34px, rgba(190, 205, 230, 0.1) 44px 50px, transparent 64px 110px),
    linear-gradient(#34508a, #4f6a97 45%, #3b5180 58%, #5b6d90 75%, #2f4169 86%, #455a85);
`;

const Tile = styled.button`
  position: relative;
  width: 46px;
  height: 46px;
  margin: 0 0 6px 5px;
  border: 1px solid rgba(200, 210, 230, 0.35);
  border-radius: 4px;
  background: linear-gradient(rgba(255, 255, 255, 0.22), rgba(255, 255, 255, 0) 60%), ${(p) => p.$tint};
  > svg:last-child {
    width: 44px;
    height: 44px;
  }
`;

const ShortTile = styled(Tile)`
  height: 38px;
  margin-bottom: 0;
  border: 0;
  > svg:last-child {
    width: 46px;
    height: 38px;
  }
`;

const RunMark = styled.svg`
  position: absolute;
  left: -6px;
  top: 18px;
  width: 5px;
  height: 8px;
`;

const Editor = styled.main`
  flex: 1;
  min-width: 0;
  display: flex;
  flex-direction: column;
  background: #f1f0ee;
`;

const Toolbar = styled.div`
  height: 40px;
  display: flex;
  align-items: center;
  border-bottom: 1px solid #d6d4d0;
  font-size: 11px;
`;

const SelectTools = styled.div`
  display: flex;
  padding-left: 8px;
`;

const ToolButton = styled.button`
  width: 26px;
  height: 26px;
  display: grid;
  place-items: center;
  border: 0;
  background: none;
`;

const Divider = styled.span`
  width: 1px;
  height: 22px;
  margin: 0 5px;
  background: #d8d6d2;
`;

const Fields = styled.div`
  display: flex;
  align-items: center;
  gap: 7px;
  padding-left: 7px;
`;

const SpinLabel = styled.label`
  display: flex;
  align-items: center;
`;

const SpinName = styled.span`
  width: ${(p) => p.$width}px;
  font-size: 11px;
`;

const SpinBox = styled.span`
  display: flex;
  width: ${(p) => p.$width}px;
  height: 19px;
  border: 1px solid #b8b5b0;
  border-radius: 4px;
  background: #fff;
  overflow: hidden;
`;

const SpinInput = styled.input`
  flex: 1;
  min-width: 0;
  border: 0;
  padding-left: 4px;
  background: none;
  outline: 0;
  font-size: 11px;
  text-align: ${(p) => p.$align || "left"};
`;

const SpinArrows = styled.span`
  width: 12px;
  display: grid;
  place-items: center;
  border-left: 1px solid #d8d6d2;
  background: #f4f3f1;
`;

const LockButton = styled(ToolButton)`
  width: 16px;
  margin-right: 4px;
`;

const UnitBox = styled.span`
  position: relative;
  display: flex;
  width: 44px;
  height: 23px;
  margin-left: 2px;
`;

const selectLook = css`
  appearance: none;
  width: 100%;
  border: 1px solid #b3b0ab;
  border-radius: 4px;
  background: linear-gradient(#fcfcfb, #eae8e6);
  padding-left: 5px;
`;

const UnitSelect = styled.select`
  ${selectLook}
`;

const ArrowsOverlay = styled.svg`
  position: absolute;
  right: 6px;
  top: 50%;
  width: 6px;
  height: 12px;
  margin-top: -6px;
  pointer-events: none;
`;

const AffectText = styled.span`
  width: 41px;
  margin-left: 8px;
`;

const AffectButton = styled.button`
  width: 24px;
  height: 36px;
  margin-right: 2px;
  display: grid;
  place-items: center;
  border: 1px solid ${(p) => (p.$on ? "#b3b0ab" : "transparent")};
  border-radius: 4px;
  background: ${(p) => (p.$on ? "linear-gradient(#e2e0de, #f0efed)" : "none")};
`;

const Workspace = styled.div`
  flex: 1;
  display: flex;
  min-height: 0;
`;

const Toolbox = styled.div`
  width: 33px;
  flex: none;
  padding: 12px 0 0 1px;
`;

const ToolboxButton = styled.button`
  width: 28px;
  height: 28px;
  display: grid;
  place-items: center;
  border: 0;
  background: none;
  > svg {
    width: 20px;
    height: 20px;
  }
`;

const SideRulerSvg = styled.svg`
  width: 10px;
  flex: none;
  align-self: stretch;
  height: auto;
  margin-bottom: 17px;
  stroke: #666;
  text {
    font-family: "Liberation Sans", sans-serif;
    font-size: 8px;
    fill: #555;
    stroke: none;
  }
`;

const Center = styled.div`
  flex: 1;
  min-width: 0;
  display: flex;
  flex-direction: column;
`;

const TopRulerSvg = styled.svg`
  width: 100%;
  height: 14px;
  flex: none;
  stroke: #555;
  text {
    font-size: 8px;
    fill: #555;
    stroke: none;
  }
`;

const CanvasArea = styled.div`
  position: relative;
  flex: 1;
  display: flex;
  background: #fff;
`;

const CanvasSvg = styled.svg`
  flex: 1;
  min-width: 0;
  height: auto;
`;

const VerticalThumb = styled.span`
  position: absolute;
  right: 0;
  top: 29%;
  width: 2px;
  height: 14%;
  background: #f07746;
`;

const ScrollRow = styled.div`
  height: 17px;
  padding-top: 6px;
`;

const HorizontalThumb = styled.div`
  width: 37%;
  height: 3px;
  margin-left: 20%;
  background: #f07f52;
`;

const Gutter = styled.div`
  width: 27px;
  display: flex;
  flex-direction: column;
  align-items: center;
  justify-content: space-between;
  padding: 4px 4px 4px 0;
`;

const CornerButton = styled.button`
  width: 14px;
  height: 13px;
  display: grid;
  place-items: center;
  border: 1px solid #aaa7a2;
  border-radius: 3px;
  background: #f7f6f5;
  svg {
    width: 8px;
    height: 8px;
  }
`;

const DockGroup = styled.div`
  display: flex;
  flex-direction: column;
`;

const Dock = styled.div`
  width: ${(p) => (p.$border ? 30 : 28)}px;
  flex: none;
  padding: 2px 0 0 2px;
  border-left: ${(p) => (p.$border ? "1px solid #c4c2be" : 0)};
  ${DockGroup} + ${DockGroup} {
    padding-top: ${(p) => p.$gap}px;
    background: linear-gradient(#d9d7d3, #d9d7d3) 5px 5px / 16px 1px no-repeat;
  }
`;

const Grip = styled.div`
  width: 7px;
  height: 4px;
  margin: 0 0 4px 10px;
  background: repeating-linear-gradient(90deg, #cfcdc9 0 1px, transparent 1px 3px);
`;

const DockButton = styled.button`
  width: 25px;
  height: 24px;
  margin: 1px 0;
  display: grid;
  place-items: center;
  border: 1px solid ${(p) => (p.$on ? "#b3b0ab" : "transparent")};
  border-radius: 4px;
  background: ${(p) => (p.$on ? "#e6e4e2" : "none")};
`;

const PaletteRow = styled.div`
  position: relative;
  height: 17px;
  display: flex;
  align-items: flex-start;
  border-top: 1px solid #cfcdc9;
`;

const Palette = styled.div`
  flex: 1;
  display: flex;
  height: 15px;
  border-right: 1px solid #bbb;
  border-bottom: 1px solid #cfcdc9;
`;

const Swatch = styled.button`
  flex: 1;
  min-width: 0;
  border: 0;
  background: ${(p) => p.$color};
  &:last-child {
    flex: 0.4;
  }
`;

const NoColor = styled(Swatch)`
  background: #fff;
  svg {
    width: 100%;
    height: 14px;
  }
`;

const PaletteThumb = styled.span`
  position: absolute;
  left: 0;
  bottom: 0;
  width: 18.5%;
  height: 3px;
  background: #f07746;
`;

const PaletteArrow = styled.svg`
  width: 5px;
  height: 8px;
  margin: 2px 2px 0 4px;
`;

const StatusBar = styled.footer`
  height: 24px;
  display: flex;
  align-items: center;
`;

const StyleBox = styled.div`
  display: grid;
  grid-template-columns: 38px 58px 13px;
  grid-template-rows: 12px 12px;
  padding-left: 2px;
  font-size: 10px;
  line-height: 12px;
`;

const NoneText = styled.i`
  grid-column: 2 / 4;
  padding-left: 22px;
`;

const StrokeSwatch = styled.button`
  border: 0;
  background: #000;
`;

const StrokeWidth = styled.span`
  padding-left: 4px;
`;

const StatusButton = styled(ToolButton)`
  width: 15px;
  height: 22px;
`;

const LayerBox = styled.span`
  position: relative;
  display: flex;
  width: 75px;
  height: 22px;
  margin-left: 2px;
`;

const LayerSelect = styled.select`
  ${selectLook}
  font-size: 11px;
  font-weight: 600;
`;

const Message = styled.p`
  flex: 1;
  margin: 0 0 0 6px;
  white-space: nowrap;
`;

const Coords = styled.div`
  display: grid;
  grid-template-columns: 11px auto;
  margin-right: 7px;
  font-size: 11px;
  line-height: 12px;
  span:nth-child(even) {
    font-family: "DejaVu Sans Mono", monospace;
    font-size: 10px;
    text-align: right;
  }
`;

const ResizeGrip = styled.svg`
  width: 10px;
  height: 10px;
  align-self: flex-end;
  margin-left: 9px;
`;
